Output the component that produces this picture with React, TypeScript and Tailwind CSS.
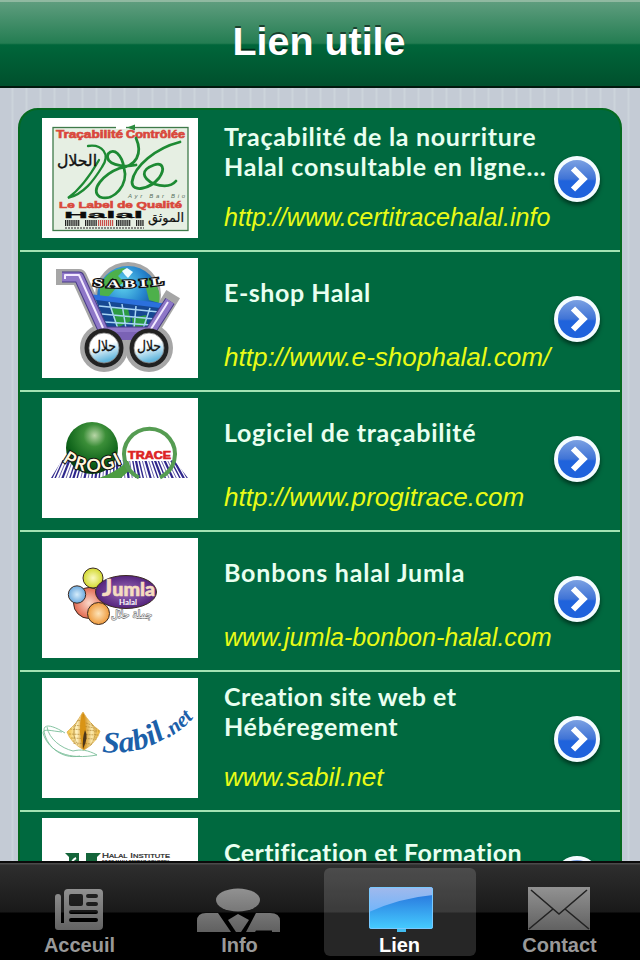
import React from 'react';

const sans = "font-['Liberation_Sans',Arial,sans-serif]";

function CertitraceLogo() {
  return (
    <svg width="156" height="120" viewBox="0 0 156 120" fontFamily="Liberation Sans, sans-serif" fontWeight="bold">
      <rect x="11" y="9.500" width="135" height="103" fill="#e6efe3" stroke="#3f7a4a" strokeWidth="1.3" />
      <rect x="74" y="7" width="10" height="4" fill="#fff" />
      <path d="M85 9.500l8-3v6z" fill="#2c8c3f" />
      <text x="14" y="20" fontSize="10" fill="#d9483b" stroke="#d9483b" strokeWidth=".6" textLength="67" lengthAdjust="spacingAndGlyphs">Traçabilité</text>
      <text x="84" y="20" fontSize="10" fill="#d9483b" stroke="#d9483b" strokeWidth=".6" textLength="59" lengthAdjust="spacingAndGlyphs">Contrôlée</text>
      <g fill="none" stroke="#1d8a33" strokeWidth="2.800" strokeLinecap="round">
        <path d="M46 28C60 26 69 36 60 49C52 62 42 76 26 80C40 70 49 56 57 42" strokeWidth="2.300" />
        <path d="M94 20C101 36 94 48 78 50C62 56 47 72 58 79C72 84 87 66 82 50C80 37 72 29 66 36C62 46 80 50 94 47" />
        <path d="M138 24C114 30 92 48 90 64C90 75 108 71 117 60C124 50 120 44 112 47C98 52 100 60 112 66C122 69 130 68 134 63" />
      </g>
      <text x="15" y="48" fontSize="16" fontWeight="normal" fill="#111" stroke="#111" strokeWidth=".4" textLength="40" lengthAdjust="spacingAndGlyphs" fontFamily="DejaVu Sans, sans-serif">الحلال</text>
      <text x="86" y="80" fontSize="6" fontStyle="italic" fontWeight="normal" fill="#58705b" textLength="57">Ayr  Bar  Bio</text>
      <text x="17" y="90" fontSize="9.500" fill="#d9483b" stroke="#d9483b" strokeWidth=".6" textLength="123" lengthAdjust="spacingAndGlyphs">Le Label de Qualité</text>
      <text x="22" y="100" fontSize="9.500" fill="#0b0b0b" stroke="#0b0b0b" strokeWidth=".3" textLength="79" lengthAdjust="spacingAndGlyphs">Halal</text>
      <path d="M23 105h15M43 105h12M74 105h15M94 105h8" stroke="#222" strokeWidth="6" strokeDasharray="1.3 .8" />
      <path d="M56 105h16" stroke="#c9504a" strokeWidth="6" strokeDasharray="1.2 .8" />
      <path d="M23 110h79" stroke="#666" strokeWidth="1.500" strokeDasharray="2 1" />
      <text x="106" y="104" fontSize="13" fontWeight="normal" fill="#111" stroke="#111" strokeWidth=".2" textLength="36" lengthAdjust="spacingAndGlyphs" fontFamily="DejaVu Sans, sans-serif">الموثق</text>
    </svg>
  );
}

function ShopLogo() {
  return (
    <svg width="156" height="120" viewBox="0 0 156 120" fontFamily="DejaVu Sans, sans-serif">
      <defs>
        <radialGradient id="globe" cx=".42" cy=".3" r=".7">
          <stop offset="0" stopColor="#5fd4ee" />
          <stop offset=".5" stopColor="#2787cf" />
          <stop offset="1" stopColor="#123d86" />
        </radialGradient>
        <linearGradient id="hub" x2=".3" y2="1">
          <stop offset=".5" stopColor="#fff" />
          <stop offset="1" stopColor="#65b7dd" />
        </linearGradient>
      </defs>
      <path d="M22 19h15L62 74h46l19-31" fill="none" stroke="#a6a6a6" strokeWidth="16" strokeLinejoin="round" strokeLinecap="square" />
      <g fill="#a6a6a6">
        <circle cx="86" cy="37" r="33" />
        <circle cx="62" cy="90" r="24" />
        <circle cx="107" cy="90" r="24" />
      </g>
      <circle cx="86" cy="39" r="31" fill="url(#globe)" />
      <path d="M58 28c5-12 15-18 26-18l-8 8 6 6-8 6-7 8-9 3zM106 20c10 6 13 14 11 25l-10-3-3-12z" fill="#4db04b" />
      <path d="M80 13l5-3 6 4-5 6-3-3z" fill="#eefcff" />
      <path d="M53 40l70 8-14 24H66z" fill="#164892" />
      <path d="M68 50l18 1 3 12-14 7zM90 60l14-3 1 10-14 4z" fill="#2c9b43" />
      <path d="M57 48l60 6M60 56l53 5M63 64l46 3M67 44l9 27M80 46l4 25M94 48l-2 23M108 50l-7 21" stroke="#a9d5f5" strokeWidth="1.500" fill="none" />
      <path d="M51 39l71 9" stroke="#2b70dd" strokeWidth="5" />
      <g fill="none" strokeLinejoin="round">
        <path d="M20 19h17L62 74h46l20-31" stroke="#493b88" strokeWidth="11" />
        <path d="M20 19h17L62 74h46l20-31" stroke="#8e77c7" strokeWidth="9" />
        <path d="M64 78h44" stroke="#7a62b5" strokeWidth="8" />
        <path d="M23 21v-4h14l24 53M109 71l17-27" stroke="#f3eaff" strokeWidth="2" />
      </g>
      {[62, 107].map((cx) => (
        <g key={cx}>
          <circle cx={cx} cy="90" r="19.500" fill="#222" />
          <circle cx={cx} cy="90" r="15" fill="url(#hub)" stroke="#888" strokeWidth=".8" />
          <text x={cx} y="93" fontSize="14" textAnchor="middle" fill="#111" stroke="#111" strokeWidth=".3" textLength="24" lengthAdjust="spacingAndGlyphs">حلال</text>
        </g>
      ))}
      <path id="sabil-arc" d="M51 28Q86 32 123 26" fill="none" />
      <text fontFamily="Liberation Serif, serif" fontSize="11" fontWeight="bold" fill="#fff" stroke="#111" strokeWidth="2.400" paintOrder="stroke">
        <textPath href="#sabil-arc" textLength="71" lengthAdjust="spacingAndGlyphs">S A B I L</textPath>
      </text>
    </svg>
  );
}

function ProgitraceLogo() {
  return (
    <svg width="156" height="120" viewBox="0 0 156 120">
      <defs>
        <radialGradient id="ball" cx=".55" cy=".26" r=".72">
          <stop offset="0" stopColor="#b8d6a7" />
          <stop offset=".3" stopColor="#3b8e38" />
          <stop offset=".75" stopColor="#0d6219" />
          <stop offset="1" stopColor="#063b0d" />
        </radialGradient>
        <clipPath id="bars"><path d="M20 62h112l14 18H9z" /></clipPath>
      </defs>
      <g clipPath="url(#bars)" stroke="#2f278c">
        {[...Array(38)].map((_, i) => (
          <path key={i} d={`M${19 + i * 3.1} 60L${9 + i * 3.7} 81`} strokeWidth={i % 3 === 0 ? 2.2 : i % 2 ? 1.4 : 0.7} />
        ))}
      </g>
      <path d="M57 80q18-6 29-18l3 9-10 9z" fill="#4d9c42" />
      <path d="M97 79.500a25.500 25.500 0 1 1 21 0" fill="none" stroke="#559c52" strokeWidth="4" />
      <circle cx="50" cy="50" r="26" fill="url(#ball)" />
      <rect x="85" y="51" width="44" height="12" fill="#fff" />
      <text x="86" y="61" fontFamily="Liberation Sans, sans-serif" fontWeight="bold" fontSize="11" fill="#dc2424" stroke="#dc2424" strokeWidth=".7" textLength="43" lengthAdjust="spacingAndGlyphs">TRACE</text>
      <path id="progi-arc" d="M20 63Q50 85 86 62" fill="none" />
      <text fontFamily="Lato, sans-serif" fontWeight="bold" fontSize="18" fill="#fff6dc" stroke="#111" strokeWidth="2" paintOrder="stroke">
        <textPath href="#progi-arc" textLength="64">PROGI</textPath>
      </text>
    </svg>
  );
}

function JumlaLogo() {
  return (
    <svg width="156" height="120" viewBox="0 0 156 120">
      <defs>
        <radialGradient id="b-red"><stop offset="0" stopColor="#fbd8c9" /><stop offset="1" stopColor="#e2694f" /></radialGradient>
        <radialGradient id="b-yellow"><stop offset="0" stopColor="#fbf9c0" /><stop offset="1" stopColor="#d2d92f" /></radialGradient>
        <radialGradient id="b-blue"><stop offset="0" stopColor="#d5ecfb" /><stop offset="1" stopColor="#6ba9dd" /></radialGradient>
        <radialGradient id="b-orange"><stop offset="0" stopColor="#fde3b8" /><stop offset="1" stopColor="#ee9a3c" /></radialGradient>
        <radialGradient id="plum"><stop offset="0" stopColor="#9d6db8" /><stop offset="1" stopColor="#54247d" /></radialGradient>
      </defs>
      <g stroke="#3c2b22" strokeWidth="1">
        <circle cx="47" cy="65" r="15.500" fill="url(#b-red)" />
        <circle cx="51" cy="40" r="10" fill="url(#b-yellow)" />
        <circle cx="35" cy="56.500" r="8.700" fill="url(#b-blue)" />
        <circle cx="56.500" cy="75.500" r="11" fill="url(#b-orange)" />
        <ellipse cx="84" cy="54" rx="30.500" ry="16.500" fill="url(#plum)" />
      </g>
      <text x="60" y="58" fontFamily="Lato, sans-serif" fontWeight="900" fontSize="19" fill="#f5ddc0" stroke="#f5ddc0" strokeWidth=".6" textLength="53" lengthAdjust="spacingAndGlyphs">
        <tspan fontSize="23">J</tspan>umla
      </text>
      <text x="77" y="66.500" fontFamily="Lato, sans-serif" fontWeight="bold" fontSize="6.500" fill="#fff" textLength="18" lengthAdjust="spacingAndGlyphs">Halal</text>
      <text x="69" y="80" fontFamily="DejaVu Sans, sans-serif" fontSize="11" fill="#eee" stroke="#777" strokeWidth="1.300" paintOrder="stroke" textLength="41" lengthAdjust="spacingAndGlyphs">جملة حلال</text>
    </svg>
  );
}

function SabilLogo() {
  return (
    <svg width="156" height="120" viewBox="0 0 156 120">
      <defs>
        <linearGradient id="gold">
          <stop offset="0" stopColor="#efbd3a" />
          <stop offset=".3" stopColor="#fff3c3" />
          <stop offset=".5" stopColor="#d18a10" />
          <stop offset=".75" stopColor="#fbe9ad" />
          <stop offset="1" stopColor="#eeb12b" />
        </linearGradient>
      </defs>
      <g fill="none" stroke="#79bd98" strokeWidth=".9">
        <path d="M23 55C12 48 2 45 2 52C3 66 18 82 38 78" />
        <path d="M20 54C9 53 1 50 1 55C7 75 28 82 55 77C46 72 39 71 31 73C19 70 7 61 5 49" />
      </g>
      <path d="M41 34Q47 45 58 53Q55 64 42 72Q29 65 25 54Q35 46 41 34z" fill="url(#gold)" stroke="#deb04d" strokeWidth=".8" />
      <g fill="none" stroke="#a67b25" strokeWidth=".6" strokeDasharray="2 .8">
        <path d="M36 42l16 6M32 47l22 3M28 51l29 2M27 56l29 1M29 60l25 1M32 65l18 1M36 42q-8 13 0 25M49 45q8 11-1 23M32 48v18M54 50v12" />
      </g>
      <path d="M40 35q7 15 2 37q-7-17-2-37z" fill="#d99416" />
      <path d="M43 52q4 7-2 19q-1-10 2-19z" fill="#4b351a" />
      <path id="sabil-name-arc" d="M60 74Q96 78 127 58" fill="none" />
      <path id="sabil-net-arc" d="M126 60Q141 52 153 38" fill="none" />
      <g fontFamily="Liberation Serif, serif" fontStyle="italic" fontWeight="bold" fill="#1c60a9">
        <text fontSize="30">
          <textPath href="#sabil-name-arc" textLength="67" lengthAdjust="spacingAndGlyphs">Sabil</textPath>
        </text>
        <text fontSize="21">
          <textPath href="#sabil-net-arc" textLength="33" lengthAdjust="spacingAndGlyphs">.net</textPath>
        </text>
      </g>
    </svg>
  );
}

function InstituteLogo() {
  return (
    <svg width="156" height="120" viewBox="0 0 156 120" fontFamily="Liberation Sans, sans-serif">
      <path d="M23 35h14v24H27V39zM44 35h15l-4 4v20H44z" fill="#14653a" />
      <path d="M34 40q-6 3-5 12" fill="none" stroke="#fff" strokeWidth="2" />
      <text x="60" y="40" fontSize="7" fill="#222" stroke="#222" strokeWidth=".2" textLength="68" lengthAdjust="spacingAndGlyphs">H<tspan fontSize="5.500">ALAL</tspan> I<tspan fontSize="5.500">NSTITUTE</tspan></text>
      <text x="60" y="45.500" fontSize="4.500" fontWeight="bold" fill="#222" textLength="67" lengthAdjust="spacingAndGlyphs">FOOD MANAGEMENT INDUSTRY</text>
    </svg>
  );
}

// long addresses are set one pixel smaller so they stay clear of the arrow
const links = [
  { lines: [['Traçabilité de la nourriture', 'tracking-[0.7px]'], ['Halal consultable en ligne…', 'tracking-[0.75px]']], url: 'http://www.certitracehalal.info', size: 'text-[25.1px]', Logo: CertitraceLogo },
  { lines: [['E-shop Halal', 'pt-px tracking-[0.55px]']], url: 'http://www.e-shophalal.com/', size: 'text-[26.1px]', Logo: ShopLogo },
  { lines: [['Logiciel de traçabilité', 'pt-px tracking-[0.74px]']], url: 'http://www.progitrace.com', size: 'text-[26.1px]', Logo: ProgitraceLogo },
  { lines: [['Bonbons halal Jumla', 'pt-px tracking-[0.8px]']], url: 'www.jumla-bonbon-halal.com', size: 'text-[25.1px]', Logo: JumlaLogo },
  { lines: [['Creation site web et', 'tracking-[0.48px]'], ['Hébéregement', 'tracking-[0.7px]']], url: 'www.sabil.net', size: 'text-[26.1px]', Logo: SabilLogo },
  { lines: [['Certification et Formation', 'pt-px tracking-[0.4px]']], url: '', size: '', Logo: InstituteLogo },
];

function Disclosure() {
  return (
    <span className="flex h-[46px] w-[46px] shrink-0 items-center justify-center rounded-full border-4 border-[#f4fbff] bg-linear-to-b from-[#7ba0e2] from-0% via-[#3f73d6] via-50% to-[#1f63dc] to-55% shadow-[0_3px_4px_rgba(0,0,0,0.5)]">
      <svg width="38" height="38" viewBox="0 0 38 38" fill="none" stroke="#fff" strokeWidth="6">
        <path d="M15 8.500L25.500 19L15 29.500" />
      </svg>
    </span>
  );
}

function NewsIcon() {
  return (
    <svg width="50" height="44" viewBox="0 0 50 44">
      <rect x="1" y="6" width="6" height="36" rx="3" fill="url(#tab-grey)" />
      <path d="M4 35h8v7H4z" fill="url(#tab-grey)" />
      <path fillRule="evenodd" fill="url(#tab-grey)" d="M14 1h31q4 0 4 4v33q0 4-4 4H5q5-1 5-5V5q0-4 4-4zM17 6q-2 0-2 2v8q0 2 2 2h10q2 0 2-2V8q0-2-2-2zM34 6a2 2 0 0 0 0 4h8a2 2 0 0 0 0-4zM34 14a2 2 0 0 0 0 4h8a2 2 0 0 0 0-4zM17 22a2 2 0 0 0 0 4h25a2 2 0 0 0 0-4zM17 30a2 2 0 0 0 0 4h25a2 2 0 0 0 0-4z" />
    </svg>
  );
}

function PersonIcon() {
  return (
    <svg width="86" height="44" viewBox="0 0 86 44" fill="url(#tab-grey)">
      <ellipse cx="42" cy="12" rx="22" ry="11.500" />
      <path d="M1 44V33q0-8 9-8h12l13 19zM50 44l10-19h14q10 0 10 8v11h-8v-1.500H60l-1 1.500z" />
      <path d="M42 26l11 6-8 12h-5l-8-12z" />
    </svg>
  );
}

function ScreenIcon() {
  return (
    <svg width="66" height="46" viewBox="0 0 66 46">
      <defs>
        <linearGradient id="screen" x2="0" y2="1"><stop offset="0" stopColor="#2468d8" /><stop offset="1" stopColor="#45ccff" /></linearGradient>
        <linearGradient id="shine" x2="0" y2="1"><stop offset="0" stopColor="#a1b9ec" /><stop offset="1" stopColor="#71b5fb" /></linearGradient>
      </defs>
      <path d="M29 43h9v3h-9z" fill="#42bdf0" />
      <rect x="1" y="1" width="64" height="42" rx="2.500" fill="url(#screen)" />
      <path d="M1 26V4q0-3 3-3h58q3 0 3 3v5Q32 12 1 26z" fill="url(#shine)" />
      <rect x="1.500" y="1.500" width="63" height="41" rx="2" fill="none" stroke="#79c9ff" />
    </svg>
  );
}

function MailIcon() {
  return (
    <svg width="62" height="45" viewBox="0 0 62 45">
      <path d="M0 0h62v43H0z" fill="url(#tab-grey)" />
      <path d="M3 3l28 24L59 3M1 42l24-20M61 42L37 22" fill="none" stroke="#222" strokeWidth="1.600" />
    </svg>
  );
}

const tabs = [
  { label: 'Acceuil', Icon: NewsIcon, active: false, offset: 'pr-[3px]' },
  { label: 'Info', Icon: PersonIcon, active: false, offset: 'pr-[3px]' },
  { label: 'Lien', Icon: ScreenIcon, active: true, offset: 'pl-px' },
  { label: 'Contact', Icon: MailIcon, active: false, offset: 'pr-0.5' },
];

export default function App() {
  return (
    <div className="flex h-[960px] w-[640px] flex-col overflow-hidden bg-[#c5ccd4]">
      <svg width="0" height="0" className="absolute">
        <linearGradient id="tab-grey" x1="0" y1="0" x2="0" y2="46" gradientUnits="userSpaceOnUse">
          <stop offset="0" stopColor="#929292" />
          <stop offset="1" stopColor="#5e5e5e" />
        </linearGradient>
      </svg>

      <header className="flex h-[88px] shrink-0 items-center justify-center border-t-2 border-b-2 border-t-[#90b9a1] border-b-[#00180d] bg-[linear-gradient(#5e9d7e_0,#247d52_49%,#00663a_51%,#00502d_100%)] pr-0.5 pb-[5px]">
        <h1 className={`text-[39.4px] leading-none font-bold text-white [text-shadow:0_-2px_0_rgba(0,0,0,0.55)] ${sans}`}>Lien utile</h1>
      </header>

      <main className="min-h-0 flex-1 overflow-hidden bg-[repeating-linear-gradient(90deg,#c4cbd5_0px,#c4cbd5_11px,#ccd4db_12px,#ccd4db_13px,#c4cbd5_14px)] px-[18px] pt-5">
        <ul className="rounded-t-[20px] border-2 border-[#056920] bg-[#00693f] pt-0.5">
          {links.map(({ lines, url, size, Logo }) => (
            <li key={url} className="flex h-[140px] items-start border-b-2 border-[#a3e3b4] pt-1.5 pr-5 pl-[22px]">
              <div className="h-[120px] w-[156px] shrink-0 bg-white">
                <Logo />
              </div>
              <div className="ml-[26px] w-[330px] pt-[3px] whitespace-nowrap">
                <div className="flex h-[60px] flex-col justify-center font-[Lato,sans-serif] text-[25px] leading-[30px] font-bold text-[#e9fff0]">
                  {lines.map(([text, spacing]) => (
                    <p key={text} className={spacing}>{text}</p>
                  ))}
                </div>
                <p className={`mt-[21px] leading-[30px] text-[#e8fb17] italic ${size} ${sans}`}>{url}</p>
              </div>
              <div className="mt-[38px]">
                <Disclosure />
              </div>
            </li>
          ))}
        </ul>
      </main>

      <nav className="flex h-[99px] shrink-0 border-t-2 border-[#0b0b0b] bg-[linear-gradient(#4a4a4a_0,#4a4a4a_1px,#2e2e2e_2px,#191919_49px,#000_50px,#000_100%)]">
        {tabs.map(({ label, Icon, active, offset }) => (
          <div key={label} className="flex w-40 justify-center pt-[5px]">
            <div className={`flex h-[88px] w-[152px] flex-col items-center rounded-md ${active ? 'bg-white/15 text-white' : 'text-[#999]'}`}>
              <div className={`flex h-16 shrink-0 items-end ${offset}`}>
                <Icon />
              </div>
              <span className={`pr-px text-[20px] leading-[27px] font-bold ${sans}`}>{label}</span>
            </div>
          </div>
        ))}
      </nav>
    </div>
  );
}
